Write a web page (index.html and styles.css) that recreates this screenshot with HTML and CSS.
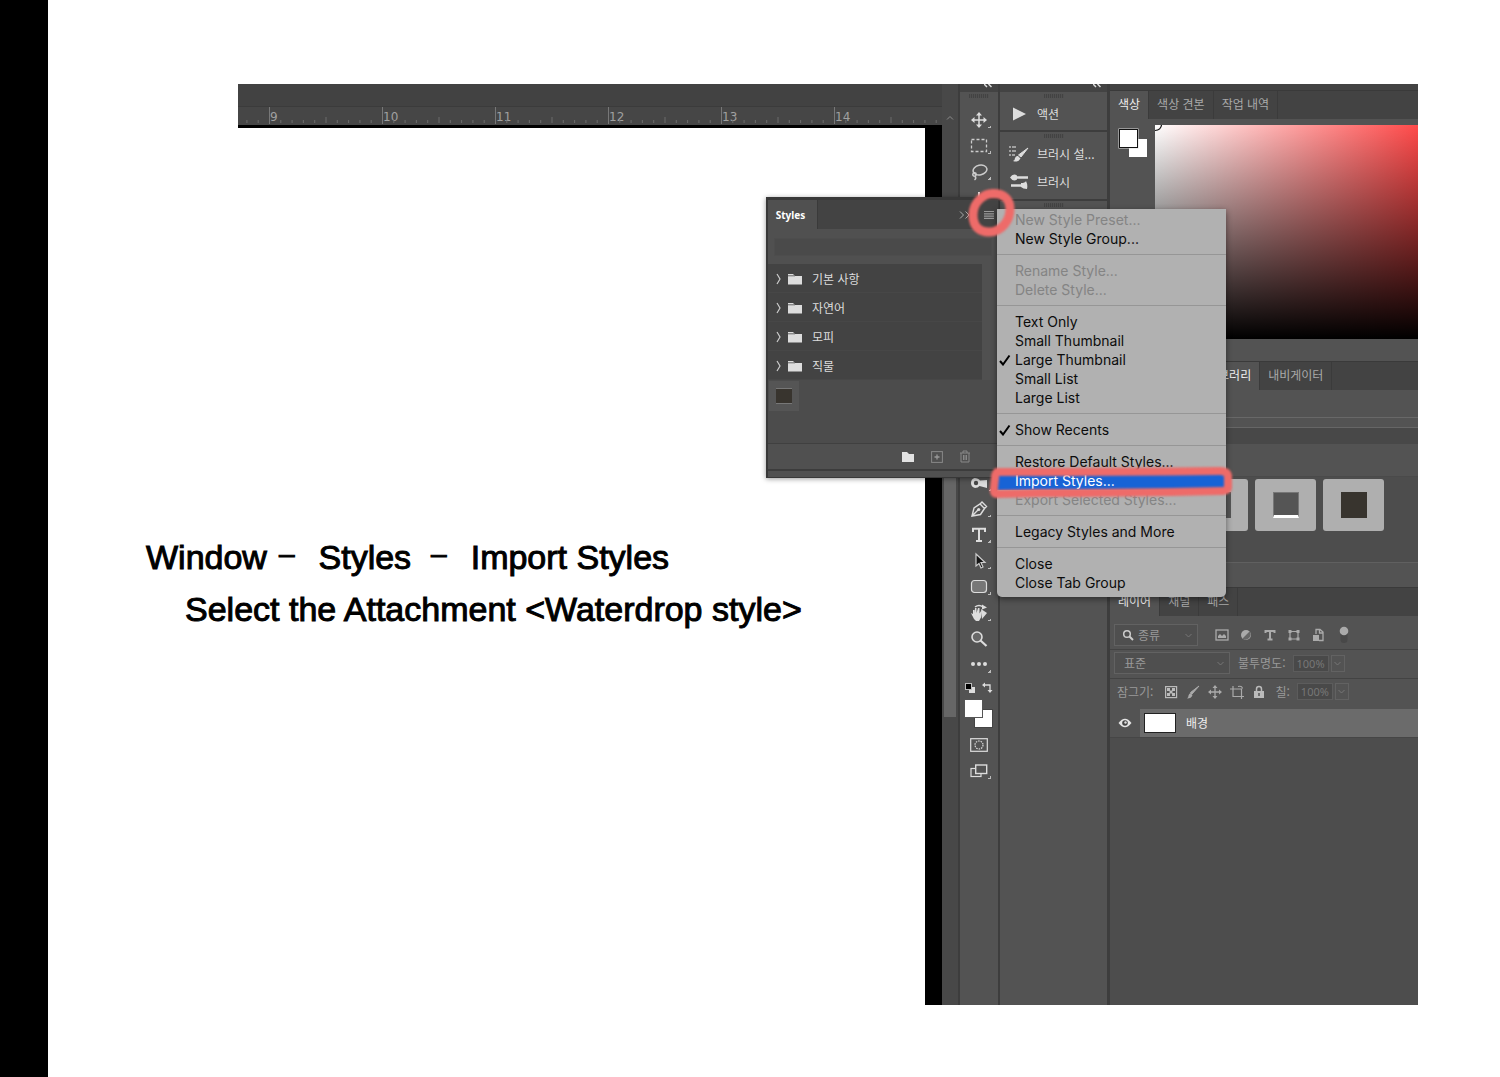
FILE: index.html
```html
<!DOCTYPE html>
<html lang="ko">
<head>
<meta charset="utf-8">
<title>Import Styles</title>
<link rel="stylesheet" href="styles.css">
</head>
<body>
<div class="page">
<div class="spine"></div>
<main class="stage">
<div class="caption">
  <p class="caption-line path"><span>Window</span><span class="dash">–</span><span class="step">Styles</span><span class="dash">–</span><span class="step">Import Styles</span></p>
  <p class="caption-line indent">Select the Attachment &lt;Waterdrop style&gt;</p>
</div>

<section class="app">
  <div class="document">
    <div class="doc-bar"></div>
    <div class="ruler">
      <svg class="ticks" width="100%" height="18" aria-hidden="true">
        <defs><pattern id="inch" x="31" width="113" height="18" patternUnits="userSpaceOnUse">
          <path d="M.5 0v17" stroke="#777"/>
          <path d="M11.8 13v3M23.1 13v3M34.4 13v3M45.7 13v3M68.3 13v3M79.6 13v3M90.9 13v3M102.2 13v3M57 10v6" stroke="#6a6a6a"/>
        </pattern></defs>
        <rect width="100%" height="18" fill="url(#inch)"/>
      </svg>
      <span>9</span><span>10</span><span>11</span><span>12</span><span>13</span><span>14</span>
    </div>
    <div class="canvas"></div>
  </div>

  <div class="scroll">
    <svg class="scroll-up" width="8" height="6" viewBox="0 0 8 6"><path d="M1 4.500 4 1.500l3 3" fill="none" stroke="#8c8c8c"/></svg>
    <div class="thumb"></div>
  </div>

  <div class="tools">
    <div class="collapse"><svg width="8" height="4" viewBox="0 0 8 4"><path d="M0 0l3 3M4.500 0l3 3" stroke="#ddd" stroke-width="1.500"/></svg></div>
    <div class="toolset">
      <div class="grip"></div>
      <button class="tool more" aria-label="Move"><svg width="18" height="18" viewBox="0 0 18 18"><path d="M9 3v12M3 9h12" stroke="#ddd" stroke-width="1.500"/><path d="M9 1l3 3.500H6zM9 17l3-3.500H6zM1 9l3.500-3v6zM17 9l-3.500-3v6z" fill="#ddd"/></svg></button>
      <button class="tool more" aria-label="Marquee"><svg width="18" height="18" viewBox="0 0 18 18"><rect x="1.500" y="2.500" width="15" height="12" fill="none" stroke="#ccc" stroke-width="1.300" stroke-dasharray="3 2"/></svg></button>
      <button class="tool more" aria-label="Lasso"><svg width="18" height="18" viewBox="0 0 18 18"><g fill="none" stroke="#ccc" stroke-width="1.500"><ellipse cx="10" cy="7" rx="7" ry="4.800" transform="rotate(-12 10 7)"/><circle cx="4.500" cy="11.500" r="1.700"/><path d="M5 13c1 1.500 1 3-.5 4"/></g></svg></button>
      <button class="tool" aria-label="Quick select"><svg width="18" height="18" viewBox="0 0 18 18"><path d="M9 3v12" stroke="#ddd" stroke-width="2"/></svg></button>
      <div class="tools-gap"></div>
      <button class="tool more" aria-label="Dodge"><svg width="18" height="18" viewBox="0 0 18 18"><path d="M4.500 4Q1 5 1 9t4 5q3 0 4.500-2l7.500 2V6l-7 .5Q8.500 4 4.500 4z" fill="#ddd"/><circle cx="6" cy="9" r="2.200" fill="#484848"/></svg></button>
      <button class="tool more" aria-label="Pen"><svg width="18" height="18" viewBox="0 0 18 18"><path d="M2 16l2-8 6-4 4.500 4.500-4 6zM10 4l2-2 4.500 4.500-2 2M2 16l6-6" fill="none" stroke="#ddd" stroke-width="1.400"/><circle cx="8.700" cy="9.500" r="1.600" fill="#ddd"/></svg></button>
      <button class="tool more" aria-label="Type"><svg width="18" height="18" viewBox="0 0 18 18"><path d="M3 6V2.800h12V6M9 3v12M6 15h6" fill="none" stroke="#ddd" stroke-width="2"/></svg></button>
      <button class="tool more" aria-label="Path selection"><svg width="18" height="18" viewBox="0 0 18 18"><path d="M6 2v12l3-2.500 2 4.500 2-1-2-4.500h4z" fill="#151515" stroke="#ccc" stroke-width="1.200"/></svg></button>
      <button class="tool more" aria-label="Rounded rectangle"><svg width="18" height="18" viewBox="0 0 18 18"><rect x="1.500" y="2.500" width="15" height="12" rx="3" fill="#777" stroke="#ddd" stroke-width="1.200"/></svg></button>
      <button class="tool more" aria-label="Rotate view"><svg width="18" height="18" viewBox="0 0 18 18"><path d="M5 3q4-3 8 0" fill="none" stroke="#ddd" stroke-width="1.500"/><path d="M12 .5l5 3-5 2zM11 5l6 4-5 6z" fill="#ddd"/><path d="M1 9l2 1V6h1.500v3l.5-5h1.500v5L8 4h1.500v5.500L11 7l1 .5-1 6-2 3.500H6L4 15z" fill="#ddd"/></svg></button>
      <button class="tool" aria-label="Zoom"><svg width="18" height="18" viewBox="0 0 18 18"><circle cx="7" cy="7" r="5" fill="#686868" stroke="#ddd" stroke-width="1.600"/><path d="M10.500 10.500l6 5.500" stroke="#ddd" stroke-width="2.200"/></svg></button>
      <button class="tool more" aria-label="More tools"><svg width="18" height="18" viewBox="0 0 18 18"><circle cx="3" cy="8" r="2" fill="#ddd"/><circle cx="9" cy="8" r="2" fill="#ddd"/><circle cx="15" cy="8" r="2" fill="#ddd"/></svg></button>
      <button class="tool-wide" aria-label="Default and swap colors"><svg width="30" height="12" viewBox="0 0 30 12"><rect x="5" y="5" width="6" height="6" fill="#ddd"/><rect x="1.500" y="1.500" width="6" height="6" fill="#000" stroke="#bbb"/><path d="M20 3h6v6" fill="none" stroke="#ddd" stroke-width="1.300"/><path d="M21 .5v5L18 3zM23.500 8h5L26 11z" fill="#ddd"/></svg></button>
      <button class="tool-wide" aria-label="Foreground and background color"><svg width="30" height="30" viewBox="0 0 30 30"><rect x="10.500" y="11.500" width="18" height="18" fill="#fff" stroke="#444"/><rect x=".5" y="1.500" width="18" height="18" fill="#fff" stroke="#555"/></svg></button>
      <button class="tool mask" aria-label="Quick mask"><svg width="18" height="14" viewBox="0 0 18 14"><rect x=".7" y=".7" width="16.600" height="12.600" fill="none" stroke="#ddd" stroke-width="1.200"/><circle cx="9" cy="7" r="4" fill="none" stroke="#ddd" stroke-width="1.200" stroke-dasharray="1.500 1"/></svg></button>
      <button class="tool more" aria-label="Screen mode"><svg width="18" height="14" viewBox="0 0 18 14"><rect x="1" y="4.500" width="10" height="8" fill="none" stroke="#ddd" stroke-width="1.200"/><rect x="5.700" y="1" width="11" height="8.500" fill="#535353" stroke="#ddd" stroke-width="1.400"/></svg></button>
    </div>
  </div>

  <div class="dock">
    <div class="collapse"><svg width="8" height="4" viewBox="0 0 8 4"><path d="M0 0l3 3M4.500 0l3 3" stroke="#ddd" stroke-width="1.500"/></svg></div>
    <div class="dock-group">
      <div class="grip"></div>
      <button class="dock-item"><svg width="20" height="18" viewBox="0 0 20 18"><path d="M4 2.500v13l13-6.500z" fill="#ddd"/></svg>액션</button>
    </div>
    <div class="dock-group second">
      <div class="grip"></div>
      <button class="dock-item"><svg width="20" height="18" viewBox="0 0 20 18"><path d="M0 2h2M3 2h4M0 6h2M3 6h4M0 10h2M3 10h3" stroke="#bbb" stroke-width="1.500"/><path d="M19 3l-7 9-2.500-2z" fill="#ddd" stroke="#ddd"/><path d="M9 11l2.500 2.500Q9 18 4 16q2-.5 2-3 1-2.500 3-2z" fill="#ddd"/></svg>브러시 설...</button>
      <button class="dock-item"><svg width="20" height="18" viewBox="0 0 20 18"><path d="M8 4.500h11M2 12.500h10" stroke="#ddd" stroke-width="2.500"/><path d="M1 4.500Q4 0 8 2.500v4Q4 9 1 4.500zM12 10q4 0 5-2 2 4 1 8-4 0-6-2z" fill="#ddd"/></svg>브러시</button>
    </div>
    <div class="dock-group rest"><div class="grip"></div></div>
  </div>

  <div class="panels">
    <div class="panels-top"></div>
    <div class="tabs"><button class="tab on">색상</button><button class="tab">색상 견본</button><button class="tab">작업 내역</button></div>
    <div class="color">
      <svg width="30" height="30" viewBox="0 0 30 30"><rect x="11" y="11" width="18" height="18" fill="#fff"/><rect x="1" y="1" width="19" height="19" fill="#fff" stroke="#ddd" stroke-width="1"/><rect x="1.500" y="1.500" width="18" height="18" fill="#fff" stroke="#111"/></svg>
      <div class="field"><svg width="8" height="8" viewBox="0 0 8 8"><path d="M6.500 0Q6 5 0 5.500" fill="none" stroke="#111" stroke-width="1.200"/></svg></div>
    </div>
    <div class="tabs lib-tabs"><span class="tab-space"></span><button class="tab on">라이브러리</button><button class="tab">내비게이터</button></div>
    <div class="lib-head"></div>
    <div class="lib-search"></div>
    <div class="lib-bar"></div>
    <div class="cards"><div class="card"><i class="chip"></i></div><div class="card"><i class="chip"></i></div><div class="card"><i class="chip lit"></i></div><div class="card"><i class="chip brown"></i></div></div>
    <div class="lib-foot"></div>
    <div class="tabs"><button class="tab on">레이어</button><button class="tab">채널</button><button class="tab">패스</button></div>
    <div class="row filters">
      <label class="pick kind"><svg width="12" height="12" viewBox="0 0 12 12"><circle cx="5" cy="5" r="3.300" fill="none" stroke="#ccc" stroke-width="1.500"/><path d="M7.500 7.500L11 11" stroke="#ccc" stroke-width="2"/></svg><select aria-label="종류"><option>종류</option></select><svg width="7" height="5" viewBox="0 0 7 5"><path d="M.5 1l3 3 3-3" fill="none" stroke="#777"/></svg></label>
      <div class="filter-icons">
        <svg width="14" height="14" viewBox="0 0 14 14"><rect x="1" y="2" width="12" height="10" fill="none" stroke="#aaa" stroke-width="1.300"/><path d="M3 10V8l2-2 2 2 2-2 2 2v2z" fill="#aaa"/></svg>
        <svg width="14" height="14" viewBox="0 0 14 14"><circle cx="7" cy="7" r="5" fill="#aaa"/><path d="M3.500 10.500L10.500 3.500A5 5 0 013.500 10.500z" fill="#666"/></svg>
        <svg width="14" height="14" viewBox="0 0 14 14"><path d="M2.500 5V3h9v2M7 3v9M4.500 11.500h5" fill="none" stroke="#aaa" stroke-width="2"/></svg>
        <svg width="14" height="14" viewBox="0 0 14 14"><path d="M3 2v10M11 2v10M3 3.500h8M3 11h8" stroke="#aaa" stroke-width="1.200"/><path d="M1.500 2h3v3h-3zM9.500 2h3v3h-3zM1.500 9.500h3v3h-3zM9.500 9.500h3v3h-3z" fill="#aaa"/></svg>
        <svg width="14" height="14" viewBox="0 0 14 14"><path d="M5 6V1.500h4L12 4v8.500H8M8.500 1.500V5H12" fill="none" stroke="#aaa" stroke-width="1.300"/><path d="M2 7h6v6H2z" fill="#aaa"/></svg>
      </div>
      <svg class="toggle" width="10" height="18" viewBox="0 0 10 18"><rect x="1.500" y="2" width="7" height="15" rx="3.500" fill="#484848"/><circle cx="5" cy="5" r="4.300" fill="#aaa"/></svg>
    </div>
    <div class="row blend">
      <label class="pick mode"><select aria-label="표준"><option>표준</option></select><svg width="7" height="5" viewBox="0 0 7 5"><path d="M.5 1l3 3 3-3" fill="none" stroke="#777"/></svg></label>
      <label for="opacity">불투명도:</label><span class="amount"><input id="opacity" value="100%"><button aria-label="불투명도"><svg width="7" height="5" viewBox="0 0 7 5"><path d="M.5 1l3 3 3-3" fill="none" stroke="#777"/></svg></button></span>
    </div>
    <div class="row locks">
      <span>잠그기:</span>
      <div class="lock-icons">
        <svg width="14" height="14" viewBox="0 0 14 14"><rect x="1.600" y="1.600" width="11" height="11" fill="none" stroke="#bbb" stroke-width="1.200"/><path d="M3 3h3v3H3zM8 3h3v3H8zM5.500 5.500h3v3h-3zM3 8h3v3H3zM8 8h3v3H8z" fill="#bbb"/></svg>
        <svg width="14" height="14" viewBox="0 0 14 14"><path d="M13 1L6 9 4.500 7.500z" fill="#aaa" stroke="#aaa"/><path d="M4.500 8l2 2q-1 3.500-5.500 3.500 1.500-1 1.500-3 .5-2 2-2.500z" fill="#aaa"/></svg>
        <svg width="14" height="14" viewBox="0 0 14 14"><path d="M7 2v10M2 7h10" stroke="#aaa" stroke-width="1.300"/><path d="M7 0l2.500 3h-5zM7 14l2.500-3h-5zM0 7l3-2.500v5zM14 7l-3-2.500v5z" fill="#aaa"/></svg>
        <svg width="14" height="14" viewBox="0 0 14 14"><path d="M3 1v10.500h11M0 4h11.500V14M8 1.500q4-1 4.500 2" fill="none" stroke="#aaa" stroke-width="1.200"/></svg>
        <svg width="14" height="14" viewBox="0 0 14 14"><path d="M4.500 7V4a2.500 2.500 0 015 0v3" fill="none" stroke="#bbb" stroke-width="1.500"/><rect x="2" y="6" width="10" height="7" fill="#bbb"/><path d="M7 8v3" stroke="#555" stroke-width="1.500"/></svg>
      </div>
      <label for="fill">칠:</label><span class="amount"><input id="fill" value="100%"><button aria-label="칠"><svg width="7" height="5" viewBox="0 0 7 5"><path d="M.5 1l3 3 3-3" fill="none" stroke="#777"/></svg></button></span>
    </div>
    <div class="layer">
      <button class="eye" aria-label="Visibility"><svg width="14" height="10" viewBox="0 0 14 10"><path d="M.5 5Q7-3.500 13.500 5 7 13.500.5 5z" fill="#e5e5e5"/><circle cx="7" cy="5" r="2.800" fill="#444"/><circle cx="7.500" cy="4.500" r="1.200" fill="#ddd"/></svg></button>
      <div class="layer-main"><i class="layer-thumb"></i>배경</div>
    </div>
    <div class="layers-rest"></div>
  </div>

  <section class="styles-panel">
    <div class="sp-tabs"><button class="sp-tab">Styles</button><svg class="chev" width="12" height="8" viewBox="0 0 12 8"><path d="M1 .5L4.500 4 1 7.500M6.500 .5L10 4 6.500 7.500" fill="none" stroke="#aaa"/></svg><button class="sp-menu" aria-label="Panel menu"><svg width="10" height="8" viewBox="0 0 10 8"><path d="M0 .5h10M0 2.800h10M0 5.100h10M0 7.400h10" stroke="#999" stroke-width="1.200"/></svg></button></div>
    <input class="sp-search" aria-label="Search styles">
    <ul class="folders">
      <li><svg width="26" height="12" viewBox="0 0 26 12"><path d="M1 1l3 5-3 5" fill="none" stroke="#ccc" stroke-width="1.200"/><path d="M12 1h5l2 2h7v8.500H12z" fill="#ddd"/><path d="M12 2.800h7" stroke="#666"/></svg>기본 사항</li>
      <li><svg width="26" height="12" viewBox="0 0 26 12"><path d="M1 1l3 5-3 5" fill="none" stroke="#ccc" stroke-width="1.200"/><path d="M12 1h5l2 2h7v8.500H12z" fill="#ddd"/><path d="M12 2.800h7" stroke="#666"/></svg>자연어</li>
      <li><svg width="26" height="12" viewBox="0 0 26 12"><path d="M1 1l3 5-3 5" fill="none" stroke="#ccc" stroke-width="1.200"/><path d="M12 1h5l2 2h7v8.500H12z" fill="#ddd"/><path d="M12 2.800h7" stroke="#666"/></svg>모피</li>
      <li><svg width="26" height="12" viewBox="0 0 26 12"><path d="M1 1l3 5-3 5" fill="none" stroke="#ccc" stroke-width="1.200"/><path d="M12 1h5l2 2h7v8.500H12z" fill="#ddd"/><path d="M12 2.800h7" stroke="#666"/></svg>직물</li>
    </ul>
    <div class="sp-swatches"><i class="sp-swatch"></i></div>
    <div class="sp-foot">
      <button aria-label="New group"><svg width="14" height="12" viewBox="0 0 14 12"><path d="M1 1h5l2 2h5v8H1z" fill="#e2e2e2"/></svg></button>
      <button aria-label="New style"><svg width="12" height="12" viewBox="0 0 12 12"><rect x=".6" y=".6" width="10.800" height="10.800" fill="none" stroke="#888"/><path d="M6 3.500v5M3.500 6h5" stroke="#999" stroke-width="1.300"/></svg></button>
      <button aria-label="Delete"><svg width="12" height="13" viewBox="0 0 12 13"><path d="M1 3h10M4 3V1h4v2M2 3v9h8V3M4.500 5v5M6 5v5M7.500 5v5" fill="none" stroke="#888"/></svg></button>
    </div>
    <div class="sp-edge"></div>
  </section>

  <div class="menu" role="menu">
    <button role="menuitem" disabled>New Style Preset...</button>
    <button role="menuitem">New Style Group...</button>
    <hr>
    <button role="menuitem" disabled>Rename Style...</button>
    <button role="menuitem" disabled>Delete Style...</button>
    <hr>
    <button role="menuitem">Text Only</button>
    <button role="menuitem">Small Thumbnail</button>
    <button role="menuitem" class="checked"><svg width="12" height="12" viewBox="0 0 12 12"><path d="M1 7l3 3.500L10.500 1.500" fill="none" stroke="#000" stroke-width="2"/></svg>Large Thumbnail</button>
    <button role="menuitem">Small List</button>
    <button role="menuitem">Large List</button>
    <hr>
    <button role="menuitem" class="checked"><svg width="12" height="12" viewBox="0 0 12 12"><path d="M1 7l3 3.500L10.500 1.500" fill="none" stroke="#000" stroke-width="2"/></svg>Show Recents</button>
    <hr>
    <button role="menuitem">Restore Default Styles...</button>
    <button role="menuitem" class="current">Import Styles...</button>
    <button role="menuitem" disabled>Export Selected Styles...</button>
    <hr>
    <button role="menuitem">Legacy Styles and More</button>
    <hr>
    <button role="menuitem">Close</button>
    <button role="menuitem">Close Tab Group</button>
  </div>

  <svg class="ring" width="52" height="54" viewBox="0 0 52 54" aria-hidden="true"><path d="M32 8C20 5 8 16 8 29c0 13 8 17 16 17 13 0 21-12 21-23S37 6 24 8" fill="none" stroke="#ee6b69" stroke-width="9" stroke-linecap="round"/></svg>
  <svg class="marker" width="248" height="38" viewBox="0 0 248 38" aria-hidden="true"><path d="M9 8Q130 8 232 7q8 0 8 6v10q0 4-8 4-100 2-180 2L9 30q-4 0-3-6l1-10q0-6 4-6" fill="none" stroke="#ee6b69" stroke-width="8" stroke-linecap="round"/></svg>
</section>
</main>
</div>
</body>
</html>
```

FILE: styles.css
```css
* { box-sizing: border-box; }
body { margin: 0; background: #fff; color: #ddd; font: 12px/16px "Noto Sans CJK KR", sans-serif; }
button { border: 0; padding: 0; margin: 0; background: none; color: inherit; font: inherit; }
svg { display: block; flex: none; }
p, ul { margin: 0; padding: 0; list-style: none; }

.page { display: grid; grid-template-columns: 48px minmax(0, 1fr); min-height: 100vh; }
.spine { background: #000; }
.stage { display: grid; grid-template-columns: 92px minmax(0, 1fr); padding: 84px 82px 72px 98px; }

.caption { grid-area: 1 / 1 / 2 / 3; z-index: 1; padding-top: 447px; justify-self: start; color: #000; font: 34px/52px "Liberation Sans", Arial, sans-serif; -webkit-text-stroke: 1px #000; }
.caption-line { white-space: nowrap; }
.path { display: flex; align-items: flex-start; }
.dash { margin-left: 12px; font-size: 28px; line-height: 46px; }
.path .step { margin-left: 24px; }
.path .step + .dash { margin-left: 20px; }
.indent { padding-left: 39px; }

.app { grid-area: 1 / 2; position: relative; display: flex; background: #434343; }

.document { flex: 1; min-width: 0; display: flex; flex-direction: column; }
.doc-bar { height: 23px; border-bottom: 1px solid #3b3b3b; background: #424242; }
.ruler { position: relative; display: flex; height: 18px; padding-left: 31px; overflow: hidden; background: #464646; color: #a0a0a0; font: 12px/20px "DejaVu Sans", sans-serif; }
.ticks { position: absolute; inset: 0; }
.ruler span { flex: none; width: 113px; padding-left: 1px; }
.canvas { flex: 1; border-top: 3px solid #000; border-right: 17px solid #000; background: #fff; }

.scroll { display: flex; flex-direction: column; width: 18px; padding-top: 31px; border-right: 2px solid #3d3d3d; background: #484848; }
.scroll-up { align-self: center; }
.thumb { height: 412px; margin: 184px 2px 0; background: #666; }

.collapse { display: flex; justify-content: flex-end; height: 8px; padding-right: 6px; background: #434343; }
.grip { width: 20px; height: 4px; margin: 0 auto; background: repeating-linear-gradient(90deg, #434343 0 1px, #505050 1px 2px); }

.tools { display: flex; flex-direction: column; width: 40px; border-right: 2px solid #3d3d3d; }
.toolset { flex: 1; padding-top: 2px; background: #535353; }
.toolset .grip { margin-bottom: 9px; }
.tool { display: flex; align-items: center; justify-content: center; width: 100%; height: 26px; }
.more { background: linear-gradient(135deg, transparent 50%, #bbb 50%) 28px 18px / 3px 3px no-repeat; }
.tools-gap { height: 259px; }
.tool-wide { display: flex; justify-content: center; width: 100%; margin-top: 4px; }
.mask { margin-top: 4px; }

.dock { display: flex; flex-direction: column; width: 110px; border-right: 3px solid #3d3d3d; }
.dock-group { height: 40px; padding-top: 2px; border-bottom: 2px solid #3d3d3d; background: #535353; }
.dock-group.second { height: 69px; }
.dock-group.rest { flex: 1; border: 0; }
.dock-item { display: flex; align-items: center; gap: 8px; width: 100%; height: 28px; padding-left: 9px; white-space: nowrap; }
.dock-group .dock-item { margin-top: 2px; }
.dock-group.second .dock-item + .dock-item { margin-top: 0; }

.panels { display: flex; flex-direction: column; width: 308px; background: #535353; }
.panels-top { height: 6px; background: #434343; }
.tabs { display: flex; height: 29px; border-top: 1px solid #3a3a3a; background: #434343; }
.tab { flex: none; padding: 0 8px 3px; border-right: 1px solid #3b3b3b; color: #aaa; }
.tab.on { background: #535353; color: #eee; }
.color { display: flex; gap: 7px; height: 242px; padding: 6px 0 22px 8px; }
.color > svg { margin-top: 3px; }
.field { flex: 1; background: linear-gradient(#0000, #000), linear-gradient(90deg, #fff, #ff4a4a); }
.tab-space { width: 78px; }
.lib-head { height: 28px; border-bottom: 1px solid #686868; }
.lib-search { height: 10px; border-bottom: 1px solid #666; }
.lib-bar { height: 49px; border-top: 16px solid #484848; border-bottom: 1px solid #4a4a4a; }
.cards { display: flex; gap: 7px; height: 86px; padding: 2px 9px; border-bottom: 1px solid #606060; background: #4d4d4d; }
.card { display: flex; align-items: center; justify-content: center; flex: none; width: 61px; height: 52px; border-radius: 3px; background: #afafaf; }
.chip { width: 26px; height: 26px; background: #555; }
.lit { border: 1px solid #777; border-bottom: 3px solid #fff; }
.brown { background: #38342e; }
.lib-foot { height: 24px; }
.row { display: flex; align-items: center; height: 29px; padding-left: 4px; border-bottom: 1px solid #434343; color: #999; }
.filters { height: 34px; padding-top: 5px; }
.blend { padding-bottom: 2px; }
.pick { display: flex; align-items: center; height: 22px; padding: 0 5px 0 7px; border: 1px solid #626262; background: #4f4f4f; }
select { flex: 1; min-width: 0; padding: 0 4px; border: 0; appearance: none; background: none; color: #999; font: inherit; }
.kind { width: 84px; }
.mode { width: 116px; padding-left: 5px; margin-right: 8px; }
.filter-icons { display: flex; gap: 10px; margin: 0 14px 0 17px; }
.lock-icons { display: flex; gap: 8px; margin: 0 9px 0 11px; }
.locks { height: 30px; padding: 0 0 5px 7px; border: 0; }
.amount { display: flex; gap: 2px; margin-left: 7px; }
.amount input { width: 36px; height: 17px; padding: 0 3px; border: 1px solid #5c5c5c; background: #494949; color: #777; font: 11px/15px "Noto Sans", sans-serif; }
.amount button { display: grid; place-items: center; width: 14px; height: 17px; border: 1px solid #626262; }
.layer { display: flex; height: 29px; border-bottom: 1px solid #464646; }
.eye { display: grid; place-items: center; width: 30px; }
.layer-main { display: flex; flex: 1; align-items: center; gap: 10px; padding-left: 4px; background: #6b6b6b; color: #eee; }
.layer-thumb { width: 32px; height: 20px; border: 1px solid #222; background: #fff; }
.layers-rest { flex: 1; background: #4d4d4d; }

.styles-panel { position: absolute; top: 113px; right: 419px; display: flex; flex-direction: column; width: 233px; border: 2px solid #383838; border-width: 3px 1px 1px 2px; background: #505050; box-shadow: 0 1px 5px #0006; }
.sp-tabs { display: flex; align-items: center; height: 29px; background: #434343; }
.sp-tab { align-self: stretch; width: 50px; margin-right: auto; border-right: 1px solid #3a3a3a; background: #505050; color: #fff; font: bold 10px/28px "Noto Sans", sans-serif; padding-right: 4px; }
.chev { margin-right: 13px; }
.sp-menu { margin-right: 4px; }
.sp-search { height: 18px; margin: 9px 6px 8px; border: 1px solid #4d4d4d; background: #4a4a4a; }
.folders { width: 214px; background: #434343; }
.folders li { display: flex; align-items: center; gap: 10px; height: 29px; padding: 2px 0 0 8px; border-bottom: 1px solid #474747; }
.sp-swatches { height: 64px; padding: 1px; border-bottom: 1px solid #404040; background: #4c4c4c; }
.sp-swatch { display: block; width: 30px; height: 30px; border: 7px solid #555; background: #38342e; box-shadow: inset 0 1px #777, inset 0 -1px #777; }
.sp-foot { display: flex; align-items: center; justify-content: flex-end; gap: 16px; height: 25px; padding-right: 27px; }
.sp-edge { height: 8px; border-top: 2px solid #3c3c3c; }

.menu { position: absolute; top: 125px; right: 192px; width: 229px; padding: 1px 0 5px; border-radius: 0 0 5px 5px; background: #b1b1b1; box-shadow: 0 2px 6px #0007; color: #0c0c0c; font: 14px/19px Inter, sans-serif; }
.menu button { display: flex; align-items: center; width: 100%; height: 19px; padding-left: 18px; text-align: left; white-space: nowrap; }
.menu button:disabled { color: #848484; }
.menu .checked { gap: 4px; padding-left: 2px; }
.menu .current { background: #1763d6; color: #fff; }
.menu hr { height: 1px; margin: 6px 0; border: 0; background: #969696; }
.ring { position: absolute; top: 102px; right: 401px; filter: blur(1px); }
.marker { position: absolute; top: 380px; right: 182px; filter: blur(1px); }
```
